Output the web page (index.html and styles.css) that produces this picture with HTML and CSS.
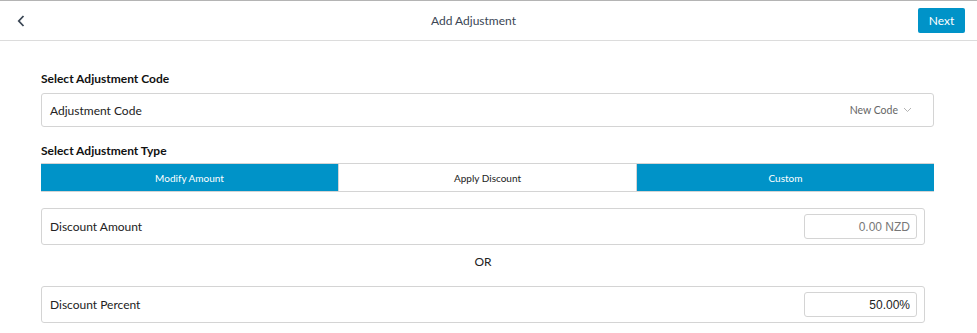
FILE: index.html
```html
<!DOCTYPE html>
<html lang="en">
<head>
  <meta charset="UTF-8">
  <meta name="viewport" content="width=device-width, initial-scale=1.0">
  <title>Add Adjustment</title>
  <link rel="stylesheet" href="styles.css">
</head>
<body>
  <header class="topbar">
    <button class="back" aria-label="Back">
      <svg width="8" height="12" viewBox="0 0 8 12"><path d="M6.5 1 L1.8 6 L6.5 11" fill="none" stroke="#3a4654" stroke-width="1.8"/></svg>
    </button>
    <h1>Add Adjustment</h1>
    <button class="next">Next</button>
  </header>

  <main class="content">
    <h2 class="label">Select Adjustment Code</h2>
    <div class="box select">
      <span>Adjustment Code</span>
      <span class="code">New Code
        <svg width="9" height="6" viewBox="0 0 9 6"><path d="M1 1 L4.5 4.5 L8 1" fill="none" stroke="#aaa" stroke-width="0.9"/></svg>
      </span>
    </div>

    <h2 class="label type">Select Adjustment Type</h2>
    <div class="segments">
      <div class="seg active">Modify Amount</div>
      <div class="seg">Apply Discount</div>
      <div class="seg active">Custom</div>
    </div>

    <div class="box field first">
      <span>Discount Amount</span>
      <input type="text" placeholder="0.00 NZD">
    </div>
    <div class="or">OR</div>
    <div class="box field">
      <span>Discount Percent</span>
      <input type="text" value="50.00%">
    </div>
  </main>
</body>
</html>
```

FILE: styles.css
```css
body {
  margin: 0;
  font-family: Lato, "Open Sans", sans-serif;
  color: #222;
  background: #fff;
}
.topbar {
  box-sizing: border-box;
  height: 41px;
  border-top: 1px solid #b4b4b4;
  border-bottom: 1px solid #dcdcdc;
  display: flex;
  align-items: center;
  position: relative;
  padding: 0 12px 0 13px;
}
.topbar h1 {
  position: absolute;
  left: 0;
  right: 30px;
  margin: 0;
  text-align: center;
  font-size: 12px;
  font-weight: normal;
  color: #3a4654;
  pointer-events: none;
}
.back {
  border: none;
  background: none;
  padding: 0 4px;
  height: 20px;
  display: flex;
  align-items: center;
  cursor: pointer;
}
.next {
  margin-left: auto;
  width: 47px;
  height: 25px;
  background: #0093c8;
  color: #fff;
  border: none;
  border-radius: 2px;
  font-family: Lato, sans-serif;
  font-size: 12px;
  cursor: pointer;
}
.content {
  padding: 0 43px 0 41px;
}
.label {
  margin: 30px 0 6px;
  font-size: 12px;
  font-weight: bold;
  line-height: 16px;
  color: #111;
}
.label.type {
  margin: 16px 0 4px;
}
.box {
  border: 1px solid #d4d4d4;
  border-radius: 3px;
  display: flex;
  align-items: center;
  justify-content: space-between;
  font-size: 12px;
  color: #222;
}
.select {
  height: 32px;
  padding: 0 21px 0 8px;
}
.code {
  font-size: 10.5px;
  color: #666;
  display: flex;
  align-items: center;
  gap: 5px;
}
.segments {
  display: flex;
  height: 27px;
  border-top: 1px solid #d4d4d4;
  border-bottom: 1px solid #d4d4d4;
}
.seg {
  flex: 1;
  display: flex;
  align-items: center;
  justify-content: center;
  font-size: 10px;
  color: #222;
  background: #fff;
}
.seg.active {
  background: #0093c8;
  color: #fff;
}
.seg + .seg {
  border-left: 1px solid #d4d4d4;
}
.field {
  height: 35px;
  margin-right: 9px;
  padding: 0 7px 0 8px;
}
.field.first {
  margin-top: 16px;
}
.field input {
  width: 113px;
  height: 25px;
  box-sizing: border-box;
  border: 1px solid #d4d4d4;
  border-radius: 3px;
  text-align: right;
  padding: 0 6px;
  font-family: "Liberation Sans", Arial, sans-serif;
  font-size: 12px;
  color: #222;
}
.field input::placeholder {
  color: #777;
}
.or {
  margin: 9px 0 16px;
  line-height: 16px;
  text-align: center;
  font-size: 12px;
  color: #222;
  padding-right: 9px;
}
```
